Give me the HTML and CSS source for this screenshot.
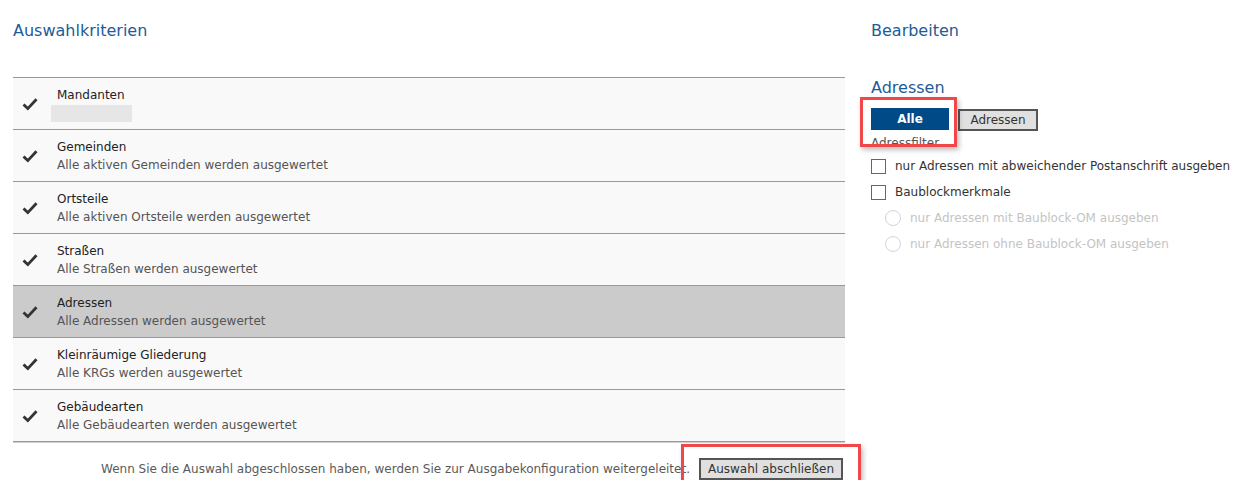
FILE: index.html
```html
<!DOCTYPE html>
<html lang="de">
<head>
<meta charset="utf-8">
<title>Auswahlkriterien</title>
<link rel="stylesheet" href="styles.css">
</head>
<body>
<div class="page">
  <section class="left">
    <h2 class="heading">Auswahlkriterien</h2>
    <ul class="criteria">
      <li class="row">
        <svg class="check" viewBox="0 0 16 14" width="16" height="14"><path d="M1.5 7.5 L5.8 11.6 L14.5 2.2" fill="none" stroke="#333" stroke-width="2.8"/></svg>
        <div class="txt"><div class="title">Mandanten</div><div class="placeholder"></div></div>
      </li>
      <li class="row">
        <svg class="check" viewBox="0 0 16 14" width="16" height="14"><path d="M1.5 7.5 L5.8 11.6 L14.5 2.2" fill="none" stroke="#333" stroke-width="2.8"/></svg>
        <div class="txt"><div class="title">Gemeinden</div><div class="sub">Alle aktiven Gemeinden werden ausgewertet</div></div>
      </li>
      <li class="row">
        <svg class="check" viewBox="0 0 16 14" width="16" height="14"><path d="M1.5 7.5 L5.8 11.6 L14.5 2.2" fill="none" stroke="#333" stroke-width="2.8"/></svg>
        <div class="txt"><div class="title">Ortsteile</div><div class="sub">Alle aktiven Ortsteile werden ausgewertet</div></div>
      </li>
      <li class="row">
        <svg class="check" viewBox="0 0 16 14" width="16" height="14"><path d="M1.5 7.5 L5.8 11.6 L14.5 2.2" fill="none" stroke="#333" stroke-width="2.8"/></svg>
        <div class="txt"><div class="title">Straßen</div><div class="sub">Alle Straßen werden ausgewertet</div></div>
      </li>
      <li class="row selected">
        <svg class="check" viewBox="0 0 16 14" width="16" height="14"><path d="M1.5 7.5 L5.8 11.6 L14.5 2.2" fill="none" stroke="#333" stroke-width="2.8"/></svg>
        <div class="txt"><div class="title">Adressen</div><div class="sub">Alle Adressen werden ausgewertet</div></div>
      </li>
      <li class="row">
        <svg class="check" viewBox="0 0 16 14" width="16" height="14"><path d="M1.5 7.5 L5.8 11.6 L14.5 2.2" fill="none" stroke="#333" stroke-width="2.8"/></svg>
        <div class="txt"><div class="title">Kleinräumige Gliederung</div><div class="sub">Alle KRGs werden ausgewertet</div></div>
      </li>
      <li class="row">
        <svg class="check" viewBox="0 0 16 14" width="16" height="14"><path d="M1.5 7.5 L5.8 11.6 L14.5 2.2" fill="none" stroke="#333" stroke-width="2.8"/></svg>
        <div class="txt"><div class="title">Gebäudearten</div><div class="sub">Alle Gebäudearten werden ausgewertet</div></div>
      </li>
    </ul>
    <div class="footer">
      <span class="hint">Wenn Sie die Auswahl abgeschlossen haben, werden Sie zur Ausgabekonfiguration weitergeleitet.</span>
      <span class="hl-wrap">
        <button class="btn btn-finish">Auswahl abschließen</button>
        <span class="highlight hl-finish"></span>
      </span>
    </div>
  </section>

  <section class="right">
    <h2 class="heading">Bearbeiten</h2>
    <h3 class="subheading">Adressen</h3>
    <div class="toggle">
      <span class="hl-wrap">
        <button class="btn primary">Alle</button>
        <span class="highlight hl-alle"></span>
      </span>
      <button class="btn btn-toggle">Adressen</button>
    </div>
    <div class="filter-label">Adressfilter</div>
    <div class="options">
      <label class="opt"><span class="box"></span>nur Adressen mit abweichender Postanschrift ausgeben</label>
      <label class="opt"><span class="box"></span>Baublockmerkmale</label>
      <label class="opt radio disabled"><span class="circle"></span>nur Adressen mit Baublock-OM ausgeben</label>
      <label class="opt radio disabled"><span class="circle"></span>nur Adressen ohne Baublock-OM ausgeben</label>
    </div>
  </section>
</div>
</body>
</html>
```

FILE: styles.css
```css
* { box-sizing: border-box; }
html, body { margin: 0; padding: 0; background: #fff; }
body {
  font-family: "DejaVu Sans", "Liberation Sans", sans-serif;
  font-size: 12px;
  color: #333;
}
.page {
  display: flex;
  gap: 26px;
  padding: 0 0 0 13px;
}
.left { width: 832px; flex: none; }
.right { flex: 1; min-width: 0; }
.heading {
  margin: 0;
  padding-top: 22px;
  font-size: 16px;
  font-weight: normal;
  color: #1d5c98;
  line-height: 18px;
}
.criteria {
  list-style: none;
  margin: 37px 0 0;
  padding: 0;
  border-top: 1px solid #999;
  box-shadow: inset 0 1px 0 #d0d0d0;
}
.row {
  display: flex;
  align-items: center;
  height: 52px;
  background: #f9f9f9;
  border-bottom: 1px solid #999;
  box-shadow: 0 1px 0 #d0d0d0;
  position: relative;
}
.row.selected { background: #cbcbcb; }
.check { margin-left: 9px; flex: none; }
.txt { margin-left: 19px; padding-top: 1px; }
.title { color: #222; line-height: 18px; }
.sub { color: #555; line-height: 18px; }
.placeholder {
  width: 81px;
  height: 17px;
  margin-left: -6px;
  margin-top: 1px;
  background: #e6e6e6;
}
.footer {
  display: flex;
  justify-content: flex-end;
  align-items: center;
  gap: 9px;
  margin-top: 16px;
  padding-right: 2px;
}
.hint { color: #5a5a5a; }
.btn {
  font-family: "DejaVu Sans", "Liberation Sans", sans-serif;
  font-size: 12px;
  color: #333;
  background: #e0e0e0;
  border: 2px solid #555;
  height: 22px;
  padding: 0 8px;
  line-height: 18px;
  cursor: pointer;
}
.btn-finish { padding: 0 7px; }
.btn-toggle { min-width: 80px; }
.btn.primary {
  background: #004a87;
  color: #fff;
  font-weight: bold;
  border-color: #004a87;
  width: 78px;
}
.hl-wrap { position: relative; display: inline-block; }
.hl-wrap .btn { display: block; }
.highlight {
  position: absolute;
  border: 3px solid #f2474a;
  box-shadow: 2px 3px 5px rgba(0,0,0,0.25);
  pointer-events: none;
}
.hl-finish { left: -18px; top: -14px; right: -18px; bottom: -12px; }
.hl-alle { left: -11px; top: -11px; right: -8px; bottom: -17px; }
.subheading {
  margin: 38px 0 0;
  font-size: 16px;
  font-weight: normal;
  color: #1d5c98;
  line-height: 20px;
}
.toggle {
  display: flex;
  align-items: flex-start;
  gap: 9px;
  margin-top: 10px;
}
.toggle > .btn { margin-top: 1px; }
.filter-label {
  color: #555;
  line-height: 14px;
  margin-top: 5px;
}
.options { margin-top: 3px; }
.opt {
  display: flex;
  align-items: center;
  gap: 9px;
  height: 26px;
  color: #333;
  font-size: 12px;
  white-space: nowrap;
}
.box {
  width: 15px; height: 15px;
  border: 1px solid #666;
  background: #fff;
  flex: none;
}
.radio { padding-left: 14px; }
.circle {
  width: 16px; height: 16px;
  border-radius: 50%;
  border: 1px solid #d4d4d4;
  flex: none;
}
.disabled { color: #c4c4c4; }
```
